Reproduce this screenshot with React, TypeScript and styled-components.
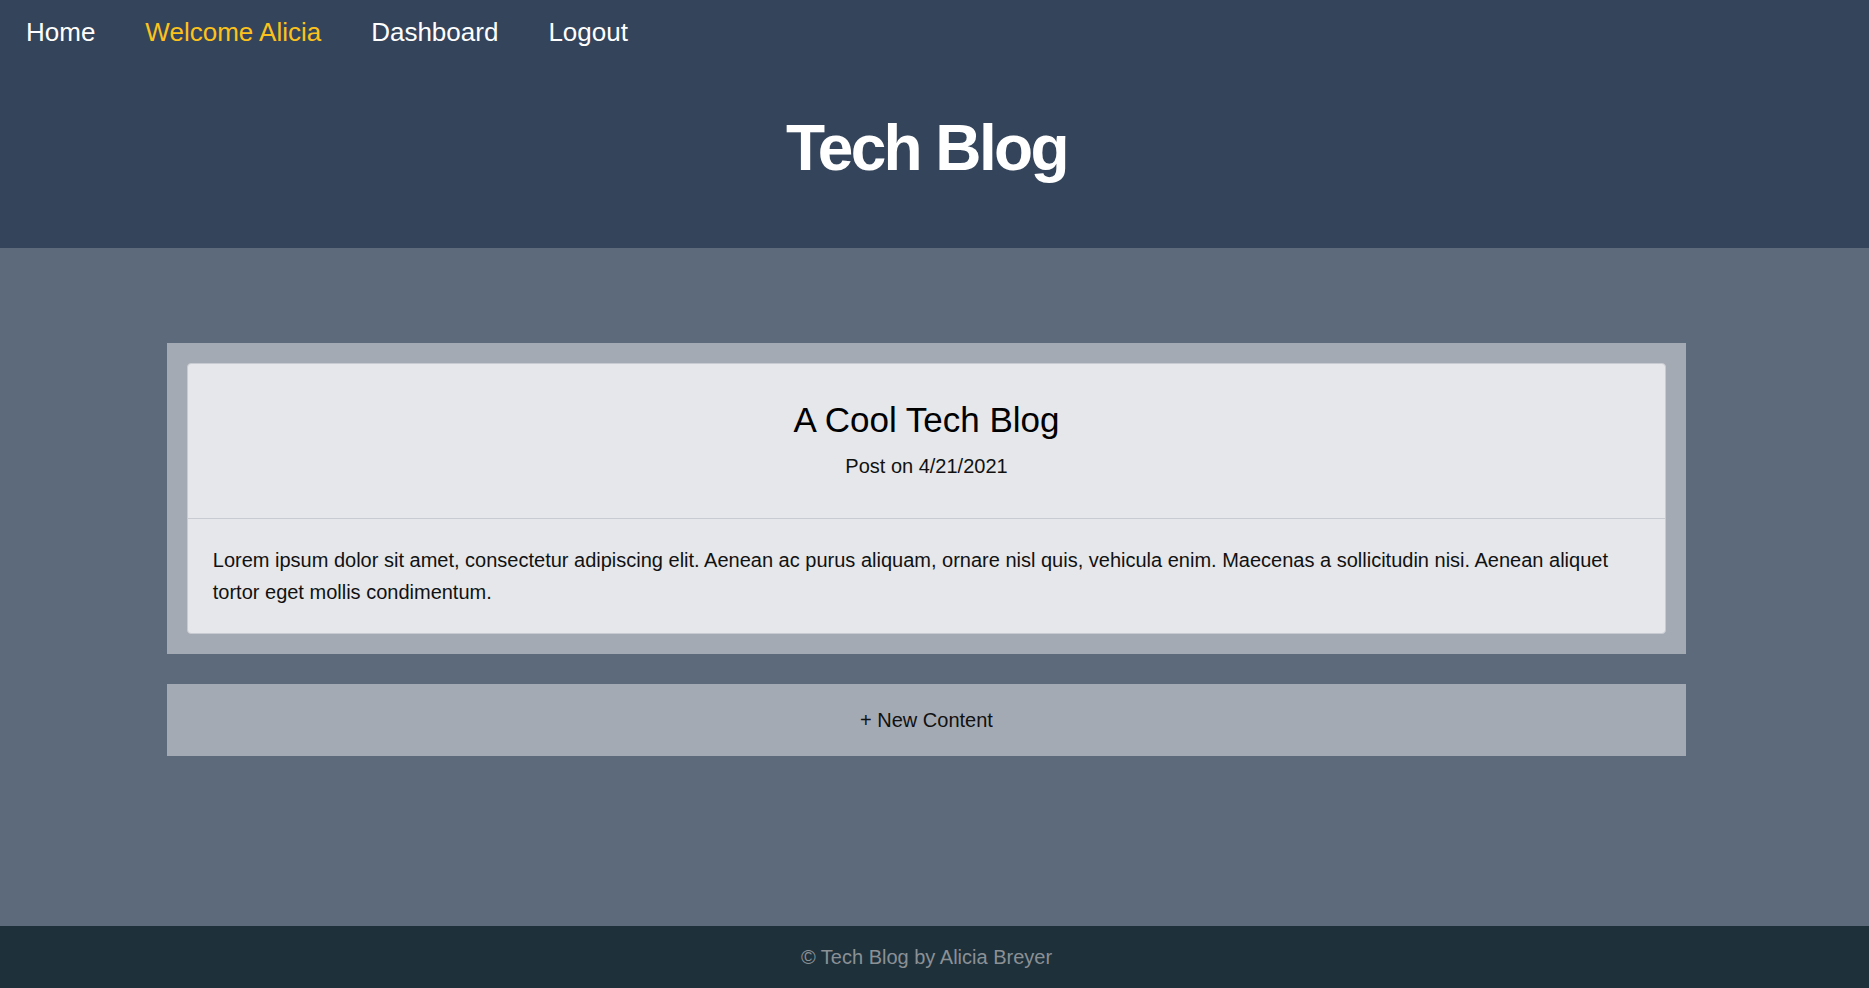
import React from "react";
import styled, { createGlobalStyle } from "styled-components";

const GlobalStyle = createGlobalStyle`
  html, body {
    margin: 0;
    padding: 0;
  }
  body {
    font-family: "Liberation Sans", Arial, Helvetica, sans-serif;
    color: #111;
  }
  * {
    box-sizing: border-box;
  }
`;

const Page = styled.div`
  min-height: 100vh;
  display: flex;
  flex-direction: column;
  background: #5c6a7b;
`;

const Header = styled.header`
  height: 248px;
  background: #34445b;
  display: flex;
  flex-direction: column;
`;

const Nav = styled.nav`
  display: flex;
  padding: 17px 0 0 1px;
`;

const NavLink = styled.a<{ $active?: boolean }>`
  padding: 0 25px;
  font-size: 26px;
  line-height: normal;
  color: ${(p) => (p.$active ? "#fcc21b" : "#ffffff")};
  text-decoration: none;
  cursor: pointer;
`;

const TitleWrap = styled.div`
  flex: 1;
  display: flex;
  align-items: center;
  justify-content: center;
  padding-right: 16px;
`;

const Title = styled.h1`
  margin: 0;
  font-size: 64px;
  font-weight: 700;
  letter-spacing: -2.6px;
  color: #ffffff;
  line-height: normal;
`;

const Main = styled.main`
  flex: 1;
  display: flex;
  flex-direction: column;
  align-items: center;
  padding: 95px 16px 0 0;
`;

const Section = styled.section`
  width: 82%;
  background: #a3aab4;
  padding: 20px;
`;

const Card = styled.article`
  background: #e5e7ea;
  border: 1px solid #c8ccd2;
  border-radius: 4px;
`;

const CardHeader = styled.div`
  text-align: center;
  padding: 36px 25px 40px;
  border-bottom: 1px solid #c8ccd2;
`;

const CardTitle = styled.h2`
  margin: 0 0 15px;
  font-size: 35px;
  font-weight: 400;
  line-height: normal;
  color: #000;
`;

const CardDate = styled.p`
  margin: 0;
  font-size: 20px;
  line-height: normal;
  color: #111;
`;

const CardBody = styled.div`
  padding: 25px;
  font-size: 20px;
  line-height: 32px;
  color: #111;
`;

const NewButton = styled.button`
  margin-top: 30px;
  width: 82%;
  height: 72px;
  border: none;
  background: #a3aab4;
  font-family: inherit;
  font-size: 20px;
  color: #111;
  cursor: pointer;
`;

const Footer = styled.footer`
  height: 62px;
  background: #1e313b;
  display: flex;
  align-items: center;
  justify-content: center;
  padding-right: 16px;
  font-size: 20px;
  color: #8b9095;
`;

export default function App() {
  return (
    <>
      <GlobalStyle />
      <Page>
        <Header>
          <Nav>
            <NavLink>Home</NavLink>
            <NavLink $active>Welcome Alicia</NavLink>
            <NavLink>Dashboard</NavLink>
            <NavLink>Logout</NavLink>
          </Nav>
          <TitleWrap>
            <Title>Tech Blog</Title>
          </TitleWrap>
        </Header>
        <Main>
          <Section>
            <Card>
              <CardHeader>
                <CardTitle>A Cool Tech Blog</CardTitle>
                <CardDate>Post on 4/21/2021</CardDate>
              </CardHeader>
              <CardBody>
                Lorem ipsum dolor sit amet, consectetur adipiscing elit. Aenean ac purus aliquam, ornare nisl quis, vehicula
                enim. Maecenas a sollicitudin nisi. Aenean aliquet tortor eget mollis condimentum.
              </CardBody>
            </Card>
          </Section>
          <NewButton>+ New Content</NewButton>
        </Main>
        <Footer>© Tech Blog by Alicia Breyer</Footer>
      </Page>
    </>
  );
}
